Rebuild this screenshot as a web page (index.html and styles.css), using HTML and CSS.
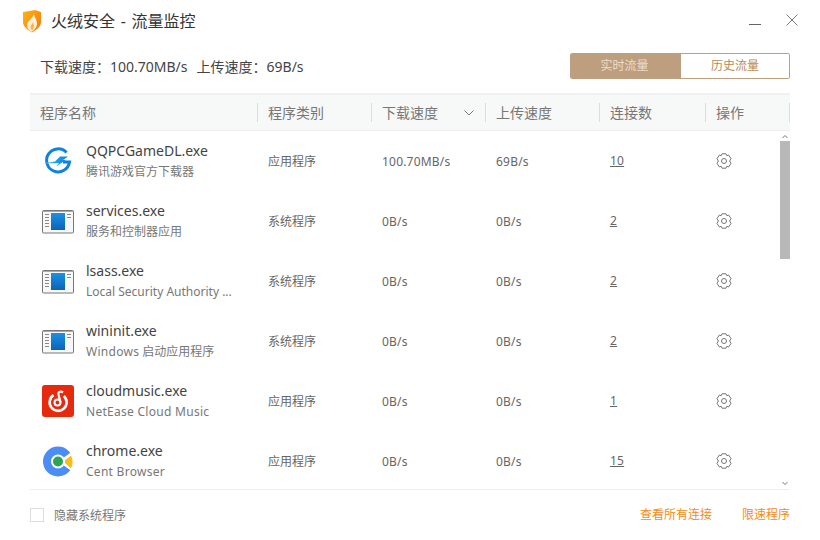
FILE: index.html
```html
<!DOCTYPE html>
<html lang="zh">
<head>
<meta charset="utf-8">
<title>火绒安全 - 流量监控</title>
<link rel="stylesheet" href="styles.css">
</head>
<body>
<div class="window">
  <header class="titlebar">
    <svg class="logo" width="20" height="24" viewBox="0 0 20 24"><defs><linearGradient id="lg" x1="0" y1="0" x2="1" y2="1"><stop offset="0" stop-color="#fdb515"/><stop offset="1" stop-color="#f4760c"/></linearGradient><linearGradient id="lf" x1="0" y1="0" x2="0" y2="1"><stop offset="0" stop-color="#fffaf0"/><stop offset="1" stop-color="#fde3b8"/></linearGradient></defs><path d="M1 3 L13 1 L19 3 V13 C19 18 14 21 10 23.500 C6 21 1 18 1 13 Z" fill="url(#lg)"/><path d="M12 5 C12.500 9 15.500 11.500 15 15.500 C14.500 19 12 21.500 9.500 23 C7 21.500 4.500 19 5 15.500 C5.500 12 10.500 10 12 5 Z" fill="url(#lf)"/><path d="M11 13 C11.500 15 12.500 16.500 11.500 19 C11 20 10.500 20.500 10 21 C8.800 19.500 8.200 18 9.200 16.200 C9.800 15.200 10.700 14.500 11 13 Z" fill="#fbb04a"/></svg>
    <h1 class="title">火绒安全 - 流量监控</h1>
    <div class="winctl">
      <svg width="12" height="12" viewBox="0 0 12 12"><path d="M0 10.500 H12" stroke="#666" fill="none"/></svg>
      <svg width="12" height="12" viewBox="0 0 12 12"><path d="M.5 .5 L11.500 11.500 M11.500 .5 L.5 11.500" stroke="#777" fill="none"/></svg>
    </div>
  </header>
  <section class="toolbar">
    <div class="speed"><span>下载速度：100.70MB/s</span><span>上传速度：69B/s</span></div>
    <div class="tabs"><button class="tab active">实时流量</button><button class="tab">历史流量</button></div>
  </section>
  <section class="table">
    <div class="thead">
      <div class="th">程序名称</div>
      <div class="th">程序类别</div>
      <div class="th sort">下载速度<svg width="10" height="6" viewBox="0 0 10 6"><path d="M.5 .5 L5 5 L9.500 .5" stroke="#777" fill="none"/></svg></div>
      <div class="th">上传速度</div>
      <div class="th">连接数</div>
      <div class="th">操作</div>
    </div>
    <div class="tbody">
      <div class="rows">
        <div class="row">
          <div class="cell name">
            <svg class="icon" width="32" height="32" viewBox="0 0 32 32"><defs><linearGradient id="bolt" x1="0" y1="0" x2="1" y2="0"><stop offset="0" stop-color="#9fdcfb"/><stop offset=".5" stop-color="#1f9ff0"/><stop offset="1" stop-color="#0f86e0"/></linearGradient></defs><path d="M24.500 7.500 A11.500 11.500 0 1 0 27.500 17 H21" fill="none" stroke="#0f82e0" stroke-width="3"/><path d="M0 18.500 L13 16.500 L18 11.500 H26 L21 15 H24 L14 21.500 L17 18 Z" fill="url(#bolt)"/></svg>
            <div class="names"><div class="exe">QQPCGameDL.exe</div><div class="desc">腾讯游戏官方下载器</div></div>
          </div>
          <div class="cell text">应用程序</div><div class="cell text num">100.70MB/s</div><div class="cell text num">69B/s</div>
          <div class="cell num"><a class="link">10</a></div>
          <div class="cell"><svg class="gear" width="16" height="16" viewBox="0 0 16 16"><use href="#gear"/></svg></div>
        </div>
        <div class="row">
          <div class="cell name">
            <svg class="icon" width="32" height="32" viewBox="0 0 32 32"><use href="#sys"/></svg>
            <div class="names"><div class="exe">services.exe</div><div class="desc">服务和控制器应用</div></div>
          </div>
          <div class="cell text">系统程序</div><div class="cell text num">0B/s</div><div class="cell text num">0B/s</div>
          <div class="cell num"><a class="link">2</a></div>
          <div class="cell"><svg class="gear" width="16" height="16" viewBox="0 0 16 16"><use href="#gear"/></svg></div>
        </div>
        <div class="row">
          <div class="cell name">
            <svg class="icon" width="32" height="32" viewBox="0 0 32 32"><use href="#sys"/></svg>
            <div class="names"><div class="exe">lsass.exe</div><div class="desc">Local Security Authority ...</div></div>
          </div>
          <div class="cell text">系统程序</div><div class="cell text num">0B/s</div><div class="cell text num">0B/s</div>
          <div class="cell num"><a class="link">2</a></div>
          <div class="cell"><svg class="gear" width="16" height="16" viewBox="0 0 16 16"><use href="#gear"/></svg></div>
        </div>
        <div class="row">
          <div class="cell name">
            <svg class="icon" width="32" height="32" viewBox="0 0 32 32"><use href="#sys"/></svg>
            <div class="names"><div class="exe">wininit.exe</div><div class="desc"><span class="latin">Windows</span> 启动应用程序</div></div>
          </div>
          <div class="cell text">系统程序</div><div class="cell text num">0B/s</div><div class="cell text num">0B/s</div>
          <div class="cell num"><a class="link">2</a></div>
          <div class="cell"><svg class="gear" width="16" height="16" viewBox="0 0 16 16"><use href="#gear"/></svg></div>
        </div>
        <div class="row">
          <div class="cell name">
            <svg class="icon" width="32" height="32" viewBox="0 0 32 32"><rect width="32" height="32" rx="3" fill="#e72a0e"/><path d="M11.500 10.200 A8.500 8.500 0 1 0 21.800 11" fill="none" stroke="#fff" stroke-width="2.600"/><circle cx="15.500" cy="17.500" r="3" fill="none" stroke="#fff" stroke-width="2"/><path d="M18.500 17.500 L16.500 9.500 C16 6.500 19 6 21 7.500" fill="none" stroke="#fff" stroke-width="2.200"/></svg>
            <div class="names"><div class="exe">cloudmusic.exe</div><div class="desc"><span class="latin">NetEase Cloud Music</span></div></div>
          </div>
          <div class="cell text">应用程序</div><div class="cell text num">0B/s</div><div class="cell text num">0B/s</div>
          <div class="cell num"><a class="link">1</a></div>
          <div class="cell"><svg class="gear" width="16" height="16" viewBox="0 0 16 16"><use href="#gear"/></svg></div>
        </div>
        <div class="row">
          <div class="cell name">
            <svg class="icon" width="32" height="32" viewBox="0 0 32 32"><circle cx="16" cy="16.500" r="15" fill="#4c8cf5"/><path d="M16 16.500 L31 6 V27 Z" fill="#fff"/><path d="M21.500 16.500 L29 10.500 A15 15 0 0 1 29 23.500 Z" fill="#fdbb13"/><circle cx="16" cy="16.500" r="7" fill="#fff"/><circle cx="16" cy="16.500" r="5" fill="#2ea354"/></svg>
            <div class="names"><div class="exe">chrome.exe</div><div class="desc"><span class="latin">Cent Browser</span></div></div>
          </div>
          <div class="cell text">应用程序</div><div class="cell text num">0B/s</div><div class="cell text num">0B/s</div>
          <div class="cell num"><a class="link">15</a></div>
          <div class="cell"><svg class="gear" width="16" height="16" viewBox="0 0 16 16"><use href="#gear"/></svg></div>
        </div>
      </div>
      <div class="scrollbar">
        <svg width="10" height="10" viewBox="0 0 10 10"><path d="M2.500 7 L5 4.500 L7.500 7" stroke="#777" fill="none"/></svg>
        <div class="track"><div class="thumb"></div></div>
        <svg width="10" height="10" viewBox="0 0 10 10"><path d="M2.500 3 L5 5.500 L7.500 3" stroke="#777" fill="none"/></svg>
      </div>
    </div>
  </section>
  <footer class="footer">
    <label class="check"><span class="box"></span>隐藏系统程序</label>
    <div class="actions"><a class="action">查看所有连接</a><a class="action">限速程序</a></div>
  </footer>
</div>
<svg class="defs" width="0" height="0">
  <defs>
    <linearGradient id="sysblue" x1="0" y1="0" x2="0" y2="1"><stop offset="0" stop-color="#1a92e4"/><stop offset="1" stop-color="#0d62b6"/></linearGradient>
    <g id="gear"><path d="M6 .8 H10 L10.800 2.700 L12.700 2.100 L15 5.600 L13.600 8 L15 10.400 L12.700 13.900 L10.800 13.300 L10 15.200 H6 L5.200 13.300 L3.300 13.900 L1 10.400 L2.400 8 L1 5.600 L3.300 2.100 L5.200 2.700 Z" fill="none" stroke="#777" stroke-linejoin="round"/><circle cx="8" cy="8" r="2.500" fill="none" stroke="#777"/></g>
    <g id="sys"><rect x=".5" y="5.500" width="31" height="22.500" rx="1" fill="#f8f8f8" stroke="#777"/><rect x="1" y="6" width="30" height="1" fill="#aaa"/><rect x="9" y="8" width="14" height="17" fill="url(#sysblue)"/><path d="M3 9.500 H7 M3 12.500 H7 M3 15.500 H7 M3 18.500 H7 M3 21.500 H7 M25 9.500 H29 M25 12.500 H29" stroke="#888"/></g>
  </defs>
</svg>
</body>
</html>
```
FILE: styles.css
```css
html, body {
  margin: 0;
  padding: 0;
  background: #fff;
}
body {
  font-family: "Noto Sans", "Noto Sans CJK SC", sans-serif;
  color: #555;
}
.defs { display: block; height: 0; }
.window {
  width: 820px;
  height: 540px;
  display: flex;
  flex-direction: column;
  overflow: hidden;
}
.titlebar {
  height: 42px;
  display: flex;
  align-items: center;
  padding: 0 22px;
  box-sizing: border-box;
  gap: 9px;
}
.logo { flex: none; }
.title {
  margin: 0;
  font-size: 16px;
  font-weight: 400;
  color: #333;
  line-height: 22px;
  word-spacing: 1.5px;
}
.winctl {
  margin-left: auto;
  display: flex;
  gap: 25px;
  align-self: flex-start;
  padding-top: 14px;
}
.toolbar {
  height: 51px;
  margin: 0 30px;
  padding: 11px 0 0 10px;
  box-sizing: border-box;
  display: flex;
  align-items: flex-start;
  justify-content: space-between;
}
.speed {
  display: flex;
  gap: 9px;
  font-size: 14px;
  line-height: 28px;
  color: #444;
}
.tabs {
  display: flex;
  width: 220px;
  height: 26px;
  box-sizing: border-box;
  border: 1px solid #bd9f80;
  border-radius: 2px;
  overflow: hidden;
}
.tab {
  flex: 1;
  border: 0;
  padding: 0 0 2px;
  background: #fff;
  color: #b88a55;
  font: 12px/22px "Noto Sans CJK SC", sans-serif;
}
.tab.active {
  flex: none;
  width: 110px;
  padding-right: 3px;
  background: #bd9f80;
  color: #ecdcc8;
}
.table {
  margin: 0 30px;
  display: flex;
  flex-direction: column;
}
.thead, .row {
  display: grid;
  grid-template-columns: 228px 114px 114px 114px 106px 84px;
}
.thead {
  height: 38px;
  background: #f7f8f8;
  border-top: 2px solid #f1f1f1;
  border-bottom: 1px solid #eeeeee;
  box-sizing: border-box;
  align-items: center;
}
.th {
  height: 19px;
  padding: 0 10px;
  box-sizing: border-box;
  border-right: 1px solid #dddddd;
  font-size: 14px;
  line-height: 19px;
  color: #777;
  display: flex;
  align-items: center;
  justify-content: space-between;
}
.sort svg { margin-right: 1px; }
.tbody {
  height: 358px;
  display: flex;
  border-bottom: 1px solid #eeeeee;
  position: relative;
}
.rows {
  flex: none;
  width: 750px;
  overflow: hidden;
}
.row {
  height: 60px;
  grid-template-columns: 228px 114px 114px 114px 106px 74px;
  align-items: center;
}
.cell {
  padding-left: 10px;
  font-size: 12px;
  line-height: 18px;
  color: #666;
}
.cell.text { padding-top: 2px; }
.cell.num { letter-spacing: .2px; }
.cell.name {
  padding-left: 12px;
  display: flex;
  align-items: center;
  gap: 12px;
}
.icon { flex: none; }
.names { min-width: 0; }
.exe {
  font-size: 14px;
  line-height: 20px;
  color: #444;
  white-space: nowrap;
}
.desc {
  font-size: 12px;
  line-height: 20px;
  padding-top: 1px;
  color: #777;
  white-space: nowrap;
}
.latin { letter-spacing: .28px; }
.link {
  color: #666;
  text-decoration: underline;
}
.gear { display: block; }
.scrollbar {
  width: 10px;
  display: flex;
  flex-direction: column;
}
.scrollbar svg { flex: none; display: block; }
.track { flex: 1; }
.thumb {
  height: 118px;
  background: #b8b8b8;
}
.footer {
  margin: 0 30px;
  height: 50px;
  display: flex;
  align-items: center;
  justify-content: space-between;
}
.check {
  display: flex;
  align-items: center;
  gap: 10px;
  font-size: 12px;
  color: #777;
}
.box {
  width: 12px;
  height: 12px;
  border: 1px solid #dddddd;
}
.actions {
  display: flex;
  gap: 30px;
  padding-bottom: 2px;
}
.action {
  font-size: 12px;
  color: #f58a16;
}
```
